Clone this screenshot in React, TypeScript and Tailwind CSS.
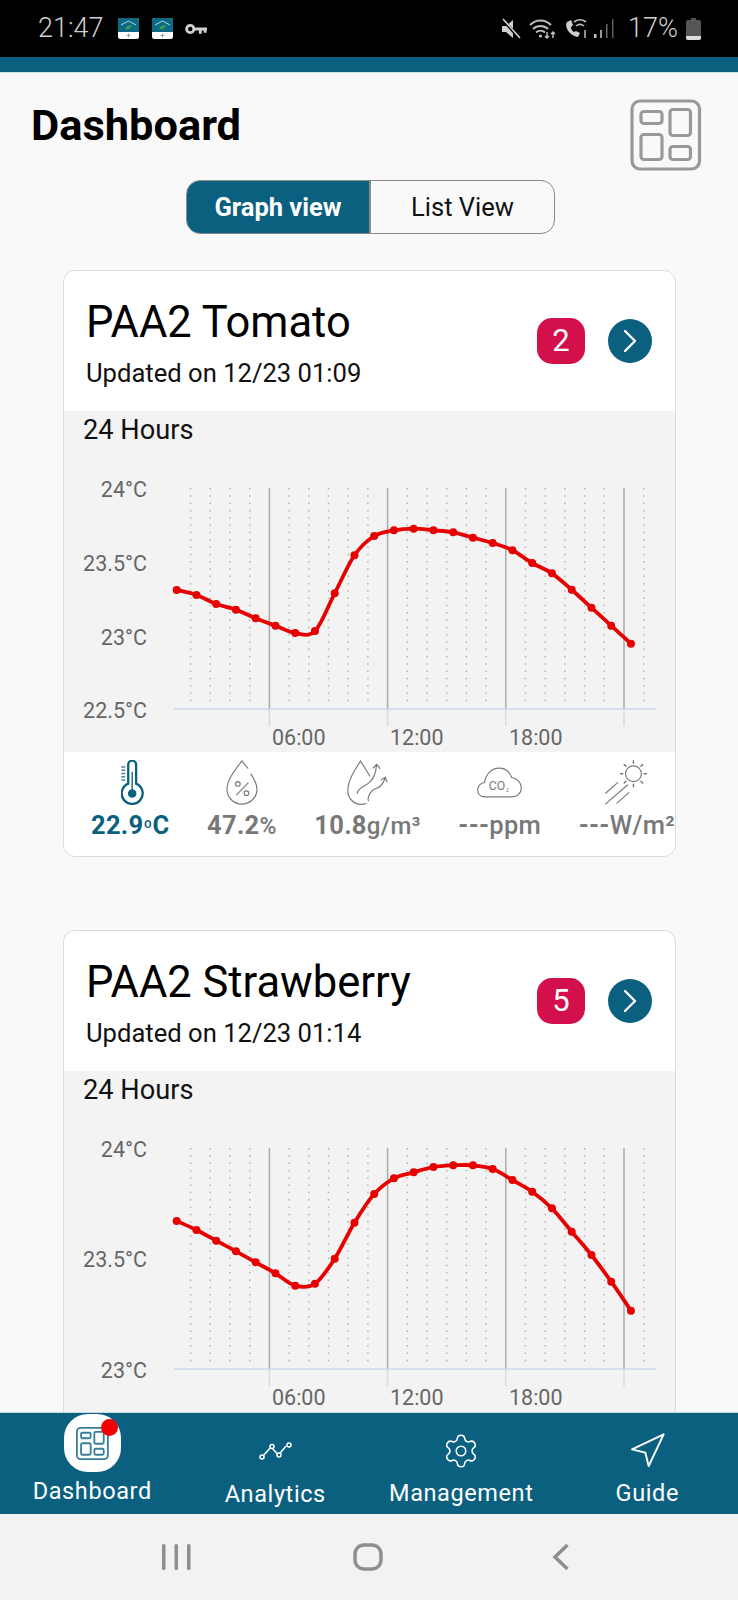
import { ChevronRight, Navigation, Settings } from 'lucide-react'

const temp1 = [390, 405, 432, 449, 475, 497, 519, 513, 400, 286, 228, 211, 206, 211, 217, 233, 249, 271, 309, 340, 389, 443, 497, 551]
const temp2 = [303, 330, 362, 394, 427, 460, 497, 491, 416, 308, 222, 175, 157, 141, 136, 136, 147, 180, 215, 265, 335, 405, 485, 572]

function smoothPath(pts: Array<[number, number]>) {
  let d = `M${pts[0][0]} ${pts[0][1]}`
  for (let i = 0; i < pts.length - 1; i++) {
    const p0 = pts[Math.max(i - 1, 0)]
    const p1 = pts[i]
    const p2 = pts[i + 1]
    const p3 = pts[Math.min(i + 2, pts.length - 1)]
    const c1x = p1[0] + (p2[0] - p0[0]) / 6
    const c1y = p1[1] + (p2[1] - p0[1]) / 6
    const c2x = p2[0] - (p3[0] - p1[0]) / 6
    const c2y = p2[1] - (p3[1] - p1[1]) / 6
    d += ` C${c1x.toFixed(1)} ${c1y.toFixed(1)} ${c2x.toFixed(1)} ${c2y.toFixed(1)} ${p2[0]} ${p2[1].toFixed(1)}`
  }
  return d
}

function Chart({ values, labels }: { values: number[]; labels: Array<{ text: string; y: number }> }) {
  const pts = values.map((v, i) => [112.7 + i * 19.75, v / 3 + 11] as [number, number])
  const grid = Array.from({ length: 24 }, (_, k) => k)

  return (
    <svg width="611" height="303" className="block">
      {grid.map((k) =>
        k % 6 === 4 ? (
          <g key={k}>
            <line x1={126.6 + k * 19.7} x2={126.6 + k * 19.7} y1="39" y2="260" stroke="#aaaaaa" strokeWidth="1.5" />
            <line x1={126.6 + k * 19.7} x2={126.6 + k * 19.7} y1="260" y2="277" stroke="#d3dbea" strokeWidth="1.5" />
          </g>
        ) : (
          <line
            key={k}
            x1={126.6 + k * 19.7}
            x2={126.6 + k * 19.7}
            y1="39"
            y2="257"
            stroke="#b4b4b4"
            strokeWidth="1.5"
            strokeDasharray="1.5 5.8"
          />
        )
      )}
      <line x1="110" x2="592" y1="260" y2="260" stroke="#cdd6e8" strokeWidth="1.5" />
      {labels.map((l) => (
        <text key={l.text} x="83" y={l.y} textAnchor="end" dominantBaseline="central" fill="#666666" fontSize="21.5">
          {l.text}
        </text>
      ))}
      {[
        ['06:00', 208],
        ['12:00', 326],
        ['18:00', 445],
      ].map(([t, x]) => (
        <text key={t} x={x} y="288" dominantBaseline="central" fill="#666666" fontSize="21.5">
          {t}
        </text>
      ))}
      <path d={smoothPath(pts)} fill="none" stroke="#e60000" strokeWidth="3.8" strokeLinejoin="round" />
      {pts.map(([x, y]) => (
        <circle key={x} cx={x} cy={y} r="4" fill="#e60000" />
      ))}
    </svg>
  )
}

function GridIcon({ className, stroke, sw }: { className: string; stroke: string; sw: number }) {
  return (
    <svg viewBox="0 0 72 72" fill="none" stroke={stroke} strokeWidth={sw} className={className}>
      <rect x="2" y="2" width="67.5" height="68" rx="8" />
      <rect x="11" y="12.5" width="21" height="12" rx="3" />
      <rect x="40" y="10.5" width="20.5" height="26" rx="3" />
      <rect x="11" y="35.5" width="21" height="25" rx="3" />
      <rect x="40" y="47.5" width="20.5" height="13" rx="3" />
    </svg>
  )
}

function ThermoIcon() {
  return (
    <svg viewBox="0 0 70 135" className="ml-[5px] h-[45px] w-[23px]" fill="none" stroke="#0b6080">
      <path d="M22 71V13a12 12 0 0 1 24 0v58a32 32 0 1 1-24 0Z" strokeWidth="7" />
      <path d="M34 35v55" strokeWidth="4" />
      <circle cx="34" cy="101" r="11" fill="#0b6080" strokeWidth="4" />
      <path d="M1 20h12M1 30h12M1 40h12M1 50h12M1 60h12" strokeWidth="4.5" stroke="#4f869c" />
    </svg>
  )
}

function DropIcon() {
  return (
    <svg viewBox="0 0 97 135" className="h-[45px] w-[32px]" fill="none" stroke="#7a7a7a" strokeWidth="3.5">
      <path d="M66 24 48 2C30 28 3 56 3 88c0 25 20 45 45 45s46-20 46-45c0-15-8-30-18-46" strokeLinecap="round" />
      <circle cx="36" cy="72" r="7" />
      <circle cx="62" cy="100" r="7" />
      <path d="M68 68 31 106" />
    </svg>
  )
}

function VaporIcon() {
  return (
    <svg viewBox="0 0 125 135" className="h-[45px] w-[42px]" fill="none" stroke="#7a7a7a" strokeWidth="3.5" strokeLinecap="round">
      <path d="M68 48 40 3C26 26 2 58 2 92c0 24 18 41 40 41 6 0 10-1 14-2" />
      <path d="M30 100c2-16 20-18 36-32 14-12 20-28 22-52" />
      <path d="M78 24 89 13l9 12" />
      <path d="M64 122c-4-6 0-14 6-24 8-14 20-10 30-20 6-6 10-12 14-24" />
      <path d="M102 60l12-8 6 14" />
    </svg>
  )
}

function CloudIcon() {
  return (
    <svg viewBox="0 0 135 92" className="h-[31px] w-[45px]" fill="none" stroke="#7a7a7a" strokeWidth="3.5">
      <path d="M24 89C10 89 2 80 2 68c0-12 9-21 21-22 2-24 20-43 44-43 18 0 31 12 37 28 17 3 29 15 29 31 0 16-12 27-29 27Z" />
      <text x="35" y="68" fontSize="37" fill="#7a7a7a" stroke="none">CO</text>
      <text x="86" y="74" fontSize="17" fill="#7a7a7a" stroke="none">2</text>
    </svg>
  )
}

function SunIcon() {
  return (
    <svg viewBox="0 0 130 135" className="h-[45px] w-[43px]" fill="none" stroke="#7a7a7a" strokeWidth="3.5" strokeLinecap="round">
      <circle cx="86" cy="41" r="24" />
      <path d="M86 2v7M86 73v7M47 41h7M118 41h7M58 13l5 5M109 64l5 5M114 13l-5 5M58 69l5-5" strokeWidth="4.5" />
      <path d="M2 100 38 68M2 132 68 75M36 130 72 98" />
    </svg>
  )
}

function Metric({ icon, value, unit, active, unitClass }: { icon: React.ReactNode; value: string; unit: React.ReactNode; active?: boolean; unitClass?: string }) {
  return (
    <div className="flex flex-col items-center">
      <div className="flex h-[45px] items-center">{icon}</div>
      <p className={`mt-[3px] whitespace-nowrap text-[25.5px] leading-[34px] font-bold tracking-[0.3px] ${active ? 'text-[#0b6080]' : 'text-[#787878]'}`}>
        {value}
        <span className={unitClass}>{unit}</span>
      </p>
    </div>
  )
}

function DeviceCard({ name, updated, alerts, values, labels, last }: {
  name: string
  updated: string
  alerts: number
  values: number[]
  labels: Array<{ text: string; y: number }>
  last?: boolean
}) {
  return (
    <div className={`mx-[63px] w-[613px] shrink-0 overflow-hidden border border-[#dcdcdc] bg-white ${last ? 'rounded-t-[12px] border-b-0' : 'mb-[73px] rounded-[12px]'}`}>
      <div className="flex h-[140px] items-start justify-between pr-[23px] pl-[22px]">
        <div>
          <p className="mt-[27px] text-[43.5px] leading-[50px] text-black">{name}</p>
          <p className="mt-[9px] text-[25.6px] leading-[32px] text-[#111]">{updated}</p>
        </div>
        <div className="mt-[47px] flex items-center gap-[23px]">
          <span className="flex h-[46px] w-[48px] items-center justify-center rounded-[15px] bg-[#d3104c] text-[31px] text-white">{alerts}</span>
          <span className="flex h-[44px] w-[44px] items-center justify-center rounded-full bg-[#0b6080] text-white">
            <ChevronRight size={40} strokeWidth={1.4} />
          </span>
        </div>
      </div>
      <div className="bg-[#f3f3f3]">
        <p className="h-[38px] pl-[19px] text-[27.2px] leading-[38px] text-[#111]">24 Hours</p>
        <Chart values={values} labels={labels} />
      </div>
      {/* the second card's sensor row sits below the fold */}
      {!last && (
        <div className="flex h-[104px] justify-between pt-[8px] pl-[27px]">
          <Metric icon={<ThermoIcon />} value="22.9" unit={<><span className="text-[19px]">º</span>C</>} active />
          <Metric icon={<DropIcon />} value="47.2" unit="%" unitClass="font-medium text-[23px]" />
          <Metric icon={<VaporIcon />} value="10.8" unit="g/m³" unitClass="font-medium text-[24px]" />
          <Metric icon={<CloudIcon />} value="---" unit="ppm" unitClass="font-medium" />
          <Metric icon={<SunIcon />} value="---" unit="W/m²" unitClass="font-medium" />
        </div>
      )}
    </div>
  )
}

function AppIcon() {
  return (
    <svg viewBox="0 0 21 21" className="h-[21px] w-[21px]">
      <rect width="21" height="21" rx="2.5" fill="#ffffff" />
      <path d="M0 14V2.5A2.5 2.5 0 0 1 2.5 0h16A2.5 2.5 0 0 1 21 2.5V14Z" fill="#0d6a85" />
      <path d="M3 7l7.5-4L18 7" fill="none" stroke="#a9d3de" strokeWidth="1" />
      <path d="M7 11c1-3 4-4 7-4-1 3-3 5-7 4Z" fill="#3f9a5a" />
      <path d="M10.5 15.5v4M8.5 17.5h4" stroke="#7fa7b3" strokeWidth="1" />
    </svg>
  )
}

function StatusBar() {
  return (
    <div className="flex h-[57px] shrink-0 items-center justify-between bg-black pr-[37px] pl-[38px] text-[27px] font-light text-[#cfcfcf]">
      <div className="flex items-center">
        <span className="w-[80px]">21:47</span>
        <AppIcon />
        <span className="w-[13px]" />
        <AppIcon />
        <svg viewBox="0 0 24 12" className="ml-[12px] h-[12px] w-[23px]" fill="none" stroke="#cfcfcf">
          <circle cx="5.5" cy="6" r="3.8" strokeWidth="3" />
          <path d="M9 6h14M16 6v5M21 6v4" strokeWidth="3" />
        </svg>
      </div>
      <div className="flex items-center">
        <svg viewBox="0 0 20 22" className="h-[22px] w-[20px]">
          <path d="M1 8h4l7-6v18l-7-6H1Z" fill="#cfcfcf" />
          <path d="M2 2l17 19" stroke="#000" strokeWidth="3" />
          <path d="M2 1l17 19" stroke="#cfcfcf" strokeWidth="1.6" />
        </svg>
        <svg viewBox="0 0 28 22" className="ml-[8px] h-[22px] w-[28px]" fill="none" stroke="#bdbdbd" strokeWidth="1.8">
          <path d="M1 7c6-6 15-6 21 0M4 11c4-4 11-4 15 0M7 14.5c2.5-2.5 6.5-2.5 9 0" />
          <circle cx="11.5" cy="18" r="1.5" fill="#cfcfcf" stroke="none" />
          <path d="M18 14v6M24 20v-6M22 16l2-2 2 2M16 18l2 2 2-2" strokeWidth="1.5" />
        </svg>
        <svg viewBox="0 0 24 22" className="ml-[7px] h-[22px] w-[24px]" fill="none">
          <path d="M3 4c-3 4 2 14 11 15l2-4-4-2-2 1c-2-1-3-3-3-5l2-2-2-5Z" fill="#cfcfcf" />
          <path d="M10 4c4-3 8-3 12 0M12 8c2.5-2 5.5-2 8 0" stroke="#bdbdbd" strokeWidth="1.6" />
          <path d="M21 12v8" stroke="#bdbdbd" strokeWidth="1.5" />
        </svg>
        <svg viewBox="0 0 20 21" className="ml-[6px] h-[21px] w-[20px]">
          <rect x="0" y="16" width="2.5" height="4" fill="#bdbdbd" />
          <rect x="6" y="12" width="2" height="8" fill="#9a9a9a" />
          <rect x="12" y="6" width="1.5" height="14" fill="#6a6a6a" />
          <rect x="18" y="1" width="1.5" height="19" fill="#5a5a5a" />
        </svg>
        <span className="ml-[14px]">17%</span>
        <svg viewBox="0 0 15 22" className="ml-[8px] h-[22px] w-[15px]">
          <path d="M5 0h5v2h3a2 2 0 0 1 2 2v16a2 2 0 0 1-2 2H2a2 2 0 0 1-2-2V4a2 2 0 0 1 2-2h3Z" fill="#555555" />
          <path d="M0 18h15v2a2 2 0 0 1-2 2H2a2 2 0 0 1-2-2Z" fill="#dddddd" />
        </svg>
      </div>
    </div>
  )
}

function BottomNav() {
  return (
    <div className="grid h-[102px] shrink-0 grid-cols-4 border-t border-[#c5dbe3] bg-[#0b6080] text-[23.5px] tracking-[0.6px] text-white">
      <div className="relative flex flex-col items-center">
        <div className="relative mt-[1px] flex h-[58px] w-[57px] items-center justify-center rounded-[24px] bg-white">
          <GridIcon className="h-[33px] w-[33px]" stroke="#3a7f99" sw={4} />
          <span className="absolute top-[5px] right-[3px] h-[17px] w-[17px] rounded-full bg-[#f00000]" />
        </div>
        <span className="mt-[3px] leading-[32px]">Dashboard</span>
      </div>
      <div className="flex flex-col items-center pr-[3px]">
        <svg viewBox="0 0 33 18" className="mt-[29px] h-[18px] w-[33px]" fill="none" stroke="#ffffff" strokeWidth="1.5">
          <path d="M4 14 12 5l7.5 8L27 4" />
          <circle cx="3" cy="15" r="2" fill="#0b6080" />
          <circle cx="13" cy="4.5" r="2" fill="#0b6080" />
          <circle cx="20" cy="13" r="2" fill="#0b6080" />
          <circle cx="30" cy="3" r="2" fill="#0b6080" />
        </svg>
        <span className="mt-[18px] leading-[32px]">Analytics</span>
      </div>
      <div className="flex flex-col items-center">
        <Settings className="mt-[19px]" size={38} strokeWidth={1} />
        <span className="mt-[7px] leading-[32px]">Management</span>
      </div>
      <div className="flex flex-col items-center pl-[3px]">
        <Navigation className="mt-[18px]" size={40} strokeWidth={1.15} />
        <span className="mt-[6px] leading-[32px]">Guide</span>
      </div>
    </div>
  )
}

export default function App() {
  return (
    <div className="flex h-[1600px] w-[738px] flex-col overflow-hidden bg-[#f9f9f9] font-['Roboto',sans-serif]">
      <StatusBar />
      <div className="h-[16px] shrink-0 border-b border-[#cfe2e8] bg-[#0b6080]" />

      <div className="min-h-0 flex-1 overflow-hidden">
        {/* Title */}
        <div className="flex h-[107px] items-start justify-between pr-[36px] pl-[31px]">
          <h1 className="mt-[26px] text-[43.4px] leading-[54px] font-bold text-black">Dashboard</h1>
          <GridIcon className="mt-[26px] h-[72px] w-[72px]" stroke="#999999" sw={3.2} />
        </div>

        {/* View toggle */}
        <div className="flex justify-center pl-[3px]">
          <div className="flex h-[54px] w-[369px] overflow-hidden rounded-[14px] border border-[#8a8a8a]">
            <div className="flex w-[184px] items-center justify-center border-r-2 border-[#8a8a8a] bg-[#0b6080] text-[25.5px] font-bold text-white">Graph view</div>
            <div className="flex flex-1 items-center justify-center text-[25.5px] text-[#111]">List View</div>
          </div>
        </div>

        {/* Cards */}
        <div className="mt-[36px]">
          <DeviceCard
            name="PAA2 Tomato"
            updated="Updated on 12/23 01:09"
            alerts={2}
            values={temp1}
            labels={[{ text: '24°C', y: 40 }, { text: '23.5°C', y: 114 }, { text: '23°C', y: 188 }, { text: '22.5°C', y: 261 }]}
          />
          <DeviceCard
            name="PAA2 Strawberry"
            updated="Updated on 12/23 01:14"
            alerts={5}
            values={temp2}
            labels={[{ text: '24°C', y: 40 }, { text: '23.5°C', y: 150 }, { text: '23°C', y: 261 }]}
            last
          />
        </div>
      </div>

      <BottomNav />

      {/* Android nav buttons */}
      <div className="flex h-[86px] shrink-0 items-center bg-[#f2f2f2]">
        <svg viewBox="0 0 30 28" className="ml-[161px] h-[28px] w-[30px]" fill="#8e8e8e">
          <rect x="1" y="1" width="3.5" height="26" rx="1.5" />
          <rect x="13.5" y="1" width="3.5" height="26" rx="1.5" />
          <rect x="26" y="1" width="3.5" height="26" rx="1.5" />
        </svg>
        <svg viewBox="0 0 30 28" className="ml-[162px] h-[28px] w-[30px]" fill="none" stroke="#8e8e8e" strokeWidth="3.5">
          <rect x="2" y="2" width="26" height="24" rx="9" />
        </svg>
        <svg viewBox="0 0 18 28" className="ml-[169px] h-[28px] w-[18px]" fill="none" stroke="#8e8e8e" strokeWidth="3.5">
          <path d="M15.5 2 3 14l12.5 12" />
        </svg>
      </div>
    </div>
  )
}
